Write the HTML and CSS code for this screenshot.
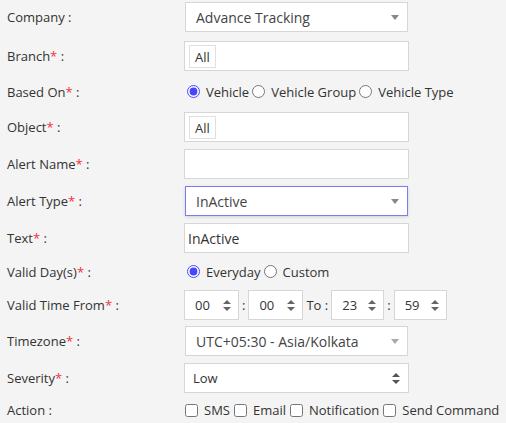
FILE: index.html
```html
<!DOCTYPE html>
<html lang="en">
<head>
    <meta charset="UTF-8">
    <title>Alert</title>
    <link rel="stylesheet" href="styles.css">
</head>
<body>
    <div class="form">
        <!-- Empresa -->
        <div class="row first">
            <label class="lbl">Company :</label>
            <div class="select">
                <span>Advance Tracking</span>
                <span class="caret"></span>
            </div>
        </div>

        <div class="row">
            <label class="lbl">Branch<span class="req">*</span> :</label>
            <div class="tags"><span class="tag">All</span></div>
        </div>

        <div class="row radios r1">
            <label class="lbl">Based On<span class="req">*</span> :</label>
            <div class="opts">
                <label><input type="radio" name="based" checked> Vehicle</label>
                <label><input type="radio" name="based"> Vehicle Group</label>
                <label><input type="radio" name="based"> Vehicle Type</label>
            </div>
        </div>

        <div class="row">
            <label class="lbl">Object<span class="req">*</span> :</label>
            <div class="tags"><span class="tag">All</span></div>
        </div>

        <div class="row">
            <label class="lbl">Alert Name<span class="req">*</span> :</label>
            <input class="txt" type="text">
        </div>

        <div class="row">
            <label class="lbl">Alert Type<span class="req">*</span> :</label>
            <div class="select focus">
                <span>InActive</span>
                <span class="caret"></span>
            </div>
        </div>

        <div class="row">
            <label class="lbl">Text<span class="req">*</span> :</label>
            <input class="txt" type="text" value="InActive">
        </div>

        <div class="row radios r2">
            <label class="lbl">Valid Day(s)<span class="req">*</span> :</label>
            <div class="opts">
                <label><input type="radio" name="days" checked> Everyday</label>
                <label><input type="radio" name="days"> Custom</label>
            </div>
        </div>

        <div class="row time-row">
            <label class="lbl">Valid Time From<span class="req">*</span> :</label>
            <div class="time">
                <div class="spin"><span>00</span><svg width="8" height="11" viewBox="0 0 8 11"><path d="M4 0L8 4H0z M4 11L0 7H8z" fill="#666"/></svg></div>
                <span class="sep">:</span>
                <div class="spin"><span>00</span><svg width="8" height="11" viewBox="0 0 8 11"><path d="M4 0L8 4H0z M4 11L0 7H8z" fill="#666"/></svg></div>
                <span class="sep to">To :</span>
                <div class="spin short"><span>23</span><svg width="8" height="11" viewBox="0 0 8 11"><path d="M4 0L8 4H0z M4 11L0 7H8z" fill="#666"/></svg></div>
                <span class="sep">:</span>
                <div class="spin short"><span>59</span><svg width="8" height="11" viewBox="0 0 8 11"><path d="M4 0L8 4H0z M4 11L0 7H8z" fill="#666"/></svg></div>
            </div>
        </div>

        <div class="row">
            <label class="lbl">Timezone<span class="req">*</span> :</label>
            <div class="select">
                <span>UTC+05:30 - Asia/Kolkata</span>
                <span class="caret light"></span>
            </div>
        </div>

        <div class="row">
            <label class="lbl">Severity<span class="req">*</span> :</label>
            <div class="native">
                <span>Low</span>
                <svg width="8" height="11" viewBox="0 0 8 11"><path d="M4 0L8 4H0z M4 11L0 7H8z" fill="#555"/></svg>
            </div>
        </div>

        <div class="row checks">
            <label class="lbl">Action :</label>
            <div class="opts">
                <label><input type="checkbox"> SMS</label>
                <label><input type="checkbox"> Email</label>
                <label><input type="checkbox"> Notification</label>
                <label><input type="checkbox"> Send Command</label>
            </div>
        </div>
    </div>
</body>
</html>
```

FILE: styles.css
```css
/* Base */
body {
    margin: 0;
    padding-top: 2px;
    background-color: #f4f4f4;
    font-family: "Open Sans", Arial, sans-serif;
    font-size: 13px;
    color: #333;
}
.form {
    width: 506px;
}
/* Filas del formulario */
.row {
    display: flex;
    align-items: center;
    margin-bottom: 7px;
}
.row.first {
    margin-bottom: 9px;
}
.row.time-row {
    margin-bottom: 6px;
}
.lbl {
    width: 184px;
    padding-left: 7px;
    box-sizing: border-box;
    flex-shrink: 0;
}
.req {
    color: #f0303c;
}
/* Select tipo select2 */
.select {
    width: 223px;
    height: 30px;
    margin-left: 1px;
    box-sizing: border-box;
    background-color: #fff;
    border: 1px solid #d6d6d6;
    display: flex;
    align-items: center;
    justify-content: space-between;
    padding: 0 8px 0 10px;
    font-size: 14px;
    color: #444;
}
.select.focus {
    border-color: #7c7cf2;
    box-shadow: 0 1px 3px rgba(0, 0, 0, 0.15);
}
.caret {
    width: 0;
    height: 0;
    border-left: 4px solid transparent;
    border-right: 4px solid transparent;
    border-top: 5px solid #888;
}
.caret.light {
    border-top-color: #aaa;
}
/* Campo con etiquetas */
.tags {
    width: 225px;
    height: 30px;
    box-sizing: border-box;
    background-color: #fff;
    border: 1px solid #d6d6d6;
    padding: 3px 4px;
}
.tag {
    display: inline-block;
    height: 23px;
    line-height: 22px;
    box-sizing: border-box;
    padding: 0 5px;
    border: 1px solid #e0e0e0;
    font-size: 13px;
    color: #333;
}
/* Campos de texto */
.txt {
    width: 225px;
    height: 30px;
    box-sizing: border-box;
    margin: 0;
    border: 1px solid #d6d6d6;
    background-color: #fff;
    padding: 0 3px;
    font-family: "Open Sans", Arial, sans-serif;
    font-size: 14px;
    color: #333;
    outline: none;
}
/* Radios y checkboxes */
.radios.r1 {
    height: 27px;
}
.radios.r2 {
    height: 23px;
}
.checks {
    height: 20px;
}
.opts {
    display: flex;
    align-items: center;
    font-size: 13px;
    padding-left: 3px;
}
.checks .opts {
    padding-left: 1px;
}
.opts label {
    display: flex;
    align-items: center;
    margin-right: 3px;
}
.checks .opts label {
    margin-right: 4px;
}
.opts input {
    margin: 0 6px 0 0;
    width: 13px;
    height: 13px;
    accent-color: #4646ff;
}
/* Horas */
.time {
    display: flex;
    align-items: center;
}
.spin {
    width: 55px;
    height: 30px;
    box-sizing: border-box;
    background-color: #fff;
    border: 1px solid #d6d6d6;
    display: flex;
    align-items: center;
    justify-content: space-between;
    padding: 0 7px 0 10px;
    font-size: 13px;
}
.spin.short {
    width: 53px;
}
.sep {
    margin: 0 3px;
}
.sep.to {
    margin: 0 3px 0 3px;
}
/* Select nativo */
.native {
    width: 225px;
    height: 30px;
    box-sizing: border-box;
    background-color: #fff;
    border: 1px solid #d6d6d6;
    display: flex;
    align-items: center;
    justify-content: space-between;
    padding: 0 8px 0 8px;
    font-size: 13px;
}
```
